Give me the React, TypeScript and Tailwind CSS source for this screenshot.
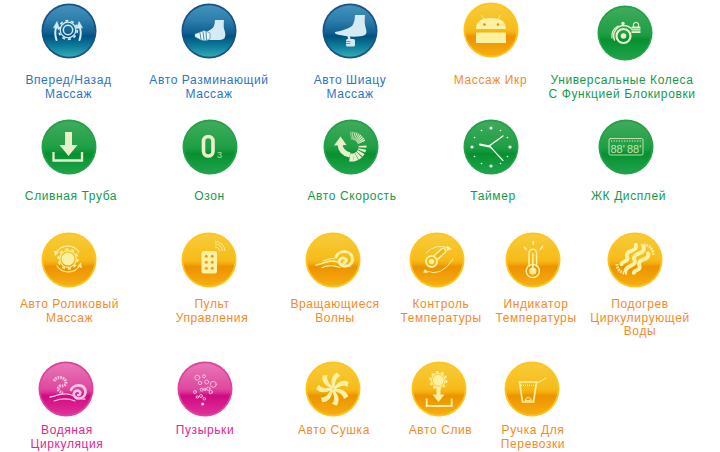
import type { ReactNode } from "react";

type Theme = "blue" | "green" | "yellow" | "pink";

const themes: Record<Theme, { rim: string; stops: [number, string][]; ink: string }> = {
  blue: {
    rim: "#1a5287",
    ink: "#d5eaf3",
    stops: [[0, "#4293ba"], [0.3, "#2c7dab"], [0.54, "#0c5f90"], [0.6, "#00527f"], [0.8, "#0d7f9c"], [1, "#35aab5"]],
  },
  green: {
    rim: "#23a049",
    ink: "#e6f1cb",
    stops: [[0, "#3fab5c"], [0.5, "#1f9f45"], [0.56, "#159a3e"], [0.63, "#07902f"], [1, "#1ea44a"]],
  },
  yellow: {
    rim: "#fdc51c",
    ink: "#fbf1a2",
    stops: [[0, "#f7cb38"], [0.5, "#f6bb1a"], [0.56, "#f4ae0e"], [0.63, "#ec9200"], [1, "#f6ae10"]],
  },
  pink: {
    rim: "#de429c",
    ink: "#f9c6e3",
    stops: [[0, "#e977b6"], [0.5, "#de489f"], [0.56, "#da3396"], [0.63, "#cf0a80"], [1, "#e0309a"]],
  },
};

function Ball({ theme, children }: { theme: Theme; children: ReactNode }) {
  const t = themes[theme];
  return (
    <svg width="56" height="56" viewBox="0 0 56 56" className="block shrink-0">
      <defs>
        <linearGradient id={`${theme}-fill`} x1="0" y1="0" x2="0" y2="1">
          {t.stops.map(([o, c]) => (
            <stop key={o} offset={o} stopColor={c} />
          ))}
        </linearGradient>
      </defs>
      <circle cx="28" cy="28" r="27.5" fill={t.rim} />
      <circle cx="28" cy="28" r="25.8" fill={`url(#${theme}-fill)`} />
      <g fill="none" strokeLinecap="round" strokeLinejoin="round" color={t.ink}>
        {children}
      </g>
    </svg>
  );
}

const ink = "currentColor";

function Gear({ cx, cy, r, disc }: { cx: number; cy: number; r: number; disc?: boolean }) {
  const c = 2 * Math.PI * (r + 0.3);
  return (
    <g>
      <circle cx={cx} cy={cy} r={r + 0.3} stroke={ink} strokeWidth="1.8" strokeDasharray={`${c / 20} ${c / 20}`} strokeLinecap="butt" />
      <circle cx={cx} cy={cy} r={r - 1.2} stroke={ink} strokeWidth="1.2" />
      <circle cx={cx} cy={cy} r={r * (disc ? 0.6 : 0.52)} stroke={ink} strokeWidth="1.5" fill={disc ? ink : "none"} />
    </g>
  );
}

const Icons = {
  gearArrows: (
    <g>
      <Gear cx={27} cy={27} r={9} />
      <path d="M15.5 37 Q13 30 15.5 23" stroke={ink} strokeWidth="2" />
      <path d="M12.5 24.5 L16 18.5 L18.5 25.5Z" fill={ink} stroke={ink} strokeWidth=".5" />
      <path d="M38.5 37 Q41 30 38.5 23" stroke={ink} strokeWidth="2" />
      <path d="M35.5 25.5 L38 18.5 L41.5 24.5Z" fill={ink} stroke={ink} strokeWidth=".5" />
    </g>
  ),
  footHand: (
    <g>
      <path d="M34 17 L43 17 Q42 24 44 29 Q46 36 39 37 L28 37 L20 33 Q20 30 24 29 Q31 27 33 23 Q34 20 34 17Z" fill={ink} />
      <path d="M14 31 L23 27.5 L29 30 L29 36 Q25 39 20 37 L14 34Z" fill="#eef7fb" stroke="#2f7ea6" strokeWidth=".6" />
      <path d="M19 30 L20 36 M22 29 L23 36.5 M25 29.5 L25.5 36.5" stroke="#2f7ea6" strokeWidth=".9" />
    </g>
  ),
  footThumb: (
    <g>
      <path d="M33 12 L43 12 Q42 20 44 26 Q46 32 40 33 Q30 35 18 32 Q12 31 13 29 Q24 27 30 23 Q33 19 33 12Z" fill={ink} />
      <path d="M26.5 32 L27.5 37" stroke={ink} strokeWidth="2.4" />
      <rect x="24" y="36" width="9" height="7.5" rx="1.5" fill={ink} />
      <path d="M24 38.5 H28 M24 40.5 H28" stroke="#1a7fa0" strokeWidth=".7" />
    </g>
  ),
  calf: (
    <g>
      <path d="M13 27 Q13 16 28 16 Q43 16 43 27Z" fill={ink} />
      <rect x="13" y="30.5" width="30" height="10.5" fill={ink} />
      <path d="M18.5 13.5 L22 18 M37.5 13.5 L34 18" stroke={ink} strokeWidth=".9" />
      <circle cx="21.5" cy="22.5" r="1.3" fill="#f28a12" />
      <circle cx="35" cy="22.5" r="1.3" fill="#f28a12" />
    </g>
  ),
  wheelLock: (
    <g>
      <circle cx="26.5" cy="31" r="7" stroke={ink} strokeWidth="2.2" />
      <circle cx="26.5" cy="31" r="2.8" fill={ink} />
      <path d="M17.5 35 A 10.5 10.5 0 0 1 26 20.5 Q33 20.5 36 26" stroke={ink} strokeWidth="1.5" />
      <path d="M15 33 A 12 12 0 0 1 21 21" stroke={ink} strokeWidth="1.2" />
      <circle cx="26" cy="18.5" r="1.7" fill={ink} />
      <rect x="34.5" y="21.5" width="9" height="6.5" rx=".5" fill={ink} />
      <path d="M36.5 21.5 V19 Q39 15.5 41.5 19 V21.5" stroke={ink} strokeWidth="1.2" />
      <path d="M34.5 23.8 H43.5 M34.5 25.8 H43.5" stroke="#1a9a42" strokeWidth=".6" />
    </g>
  ),
  download: (
    <g>
      <path d="M24 13 H31 V26 H36.5 L27.5 37 L18.5 26 H24Z" fill={ink} />
      <path d="M12.5 33 V41.5 H41 V33" stroke={ink} strokeWidth="2.3" strokeLinecap="butt" strokeLinejoin="miter" />
    </g>
  ),
  ozone: (
    <g>
      <rect x="21.5" y="17.5" width="9.5" height="19.5" rx="4.7" stroke={ink} strokeWidth="3.6" />
      <text x="35" y="39" fontSize="9" fill={ink} fillOpacity=".8" stroke="none" fontFamily="Liberation Sans, sans-serif">3</text>
    </g>
  ),
  speed: (
    <g>
      {Array.from({ length: 15 }).map((_, i) => {
        const a0 = (i < 9 ? i * 8 : 72 + (i - 8) * 17) - 4;
        const w = i < 9 ? 3 + i * 0.4 : 9 + (i - 9) * 2;
        const r = (d: number) => (d * Math.PI) / 180;
        const a1 = a0 + w;
        const p = (rad: number, d: number) => `${(28.5 + rad * Math.sin(r(d))).toFixed(2)} ${(27.7 - rad * Math.cos(r(d))).toFixed(2)}`;
        return <path key={i} d={`M${p(7, a0)} L${p(15, a0)} L${p(15, a1)} L${p(7, a1)}Z`} fill={ink} stroke="none" />;
      })}
      <path d="M27 36 Q17.5 34 17 25" stroke={ink} strokeWidth="5" strokeLinecap="butt" />
      <path d="M11 26.5 L17.5 17.5 L23.5 26Z" fill={ink} />
    </g>
  ),
  clock: (
    <g>
      {Array.from({ length: 12 }).map((_, i) => {
        const a = (i * 30 * Math.PI) / 180;
        return <circle key={i} cx={28 + 19 * Math.sin(a)} cy={28 - 19 * Math.cos(a)} r={i % 3 === 0 ? 1.6 : 0.8} fill="#ffffff" />;
      })}
      <path d="M26 27 L40 17" stroke="#fff" strokeWidth="1.4" />
      <path d="M26 26.5 L40 41.5" stroke="#fff" strokeWidth="1.1" />
      <path d="M26.5 27.5 L17 25.5" stroke="#fff" strokeWidth="2.2" />
    </g>
  ),
  lcd: (
    <g>
      <rect x="11" y="19.5" width="34" height="16.5" rx="1.5" stroke={ink} strokeWidth=".8" />
      <path d="M13 22 H43" stroke={ink} strokeWidth="1" strokeDasharray="1.2 1.4" strokeLinecap="butt" />
      <text x="12.5" y="34" fontSize="11" fill={ink} fillOpacity=".85" stroke="none" fontFamily="Liberation Sans, sans-serif">88'</text>
      <text x="29" y="34" fontSize="11" fill={ink} fillOpacity=".85" stroke="none" fontFamily="Liberation Sans, sans-serif">88'</text>
    </g>
  ),
  roller: (
    <g>
      <Gear cx={27} cy={27} r={9.5} disc />
      <path d="M15 21 A13.5 13.5 0 0 1 38 20" stroke={ink} strokeWidth="1.2" />
      <path d="M39 33 A13.5 13.5 0 0 1 16 34" stroke={ink} strokeWidth="1.2" />
      <path d="M14 24 L13 18.5 L18 20Z M40 30.5 L41 36 L36 34.5Z" fill={ink} />
    </g>
  ),
  remote: (
    <g>
      <rect x="20.5" y="19" width="15.5" height="22.5" rx="2.2" fill={ink} />
      {[0, 1, 2].map((r) => [0, 1].map((c) => <circle key={`${r}${c}`} cx={25.3 + c * 6} cy={24.3 + r * 6} r="1.5" fill="#f0a012" />))}
      <path d="M34 15 A4.5 4.5 0 0 1 38.5 19 M34 12 A7.5 7.5 0 0 1 41.5 19 M34 9.5 A10 10 0 0 1 44 19" stroke={ink} strokeWidth=".9" strokeLinecap="butt" />
    </g>
  ),
  wave: (
    <g>
      <path d="M31 25 C33 18 47 17 47.5 27 C47.5 34 39 36 35.5 32.5 C32.5 29 36 24.5 40 26.5 C42.5 28 41 31 39 30.5" stroke={ink} strokeWidth="3" />
      <path d="M11 33 C19 32 23 27 31 29.5 C36 31 40 35 45 34" stroke={ink} strokeWidth="1.5" />
      <path d="M17 35.5 C23 33 29 33 35 35.5" stroke={ink} strokeWidth="1.2" />
      <path d="M18 29 C22 28 25 26 29 26.5" stroke={ink} strokeWidth="1" />
    </g>
  ),
  tempControl: (
    <g>
      <path d="M23 29 L34 19" stroke={ink} strokeWidth="6.5" strokeLinecap="round" />
      <path d="M23 29 L34 19" stroke="#f5b015" strokeWidth="3.6" />
      <circle cx="22.5" cy="29.5" r="6.5" fill={ink} />
      <circle cx="22.5" cy="29.5" r="4.5" fill="#f5b015" />
      <circle cx="22.5" cy="29.5" r="2.7" fill={ink} />
      <path d="M17 21 Q26 11 40 16" stroke={ink} strokeWidth="1" />
      <path d="M38 13.5 L43 17 L37.5 19Z" fill={ink} />
      <path d="M17.5 39 Q32 46 44 27" stroke={ink} strokeWidth="1" />
      <path d="M16 37 L14 40.5 L19 41Z" fill={ink} />
    </g>
  ),
  tempIndicator: (
    <g>
      <path d="M19 15 L21.7 18 M28.3 9 V13 M38 13.7 L35 18" stroke={ink} strokeWidth="1.6" strokeLinecap="butt" />
      <path d="M24 34.5 V21 A3.8 3.8 0 0 1 31.6 21 V34.5" stroke={ink} strokeWidth="1.5" />
      <circle cx="27.8" cy="39" r="6.6" stroke={ink} strokeWidth="1.5" />
      <circle cx="27.8" cy="39" r="3.6" fill={ink} />
      <path d="M27.8 22 V36" stroke={ink} strokeWidth="1.6" />
    </g>
  ),
  heating: (
    <g>
      <g stroke={ink} strokeWidth="4" transform="rotate(35 28 27)">
        <path d="M28 12 C35 18 21 23 28 28 C34 32 24 37 27 42" />
        <path d="M20.5 15 C27 20 13.5 25 20.5 30 C25 33 18 36 20 39" />
        <path d="M35.5 15 C42 20 28.5 25 35.5 30 C40 33 33 36 35 39" />
      </g>
      <path d="M34 13.5 A9 9 0 0 1 46 23" stroke={ink} strokeWidth="2.8" strokeDasharray="1.7 1" strokeLinecap="butt" />
      <path d="M10 32 A9 9 0 0 0 21 41" stroke={ink} strokeWidth="2.8" strokeDasharray="1.7 1" strokeLinecap="butt" />
    </g>
  ),
  waterPink: (
    <g>
      <path d="M16 20 A6.5 6.5 0 0 1 27 19 Q30 25 22 25 Q17 29 25 32" stroke={ink} strokeWidth="3" strokeDasharray="1.6 .9" strokeLinecap="butt" />
      <path d="M33 29 C35 23 47 22 47.5 31 C47.5 37 40 39 37 36 C34 33 37 28.5 41 30 C43.5 31.5 42 34.5 40 34" stroke={ink} strokeWidth="2.6" />
      <path d="M12 36 C20 35 24 31 32 33.5 C37 35 42 39 47 38" stroke={ink} strokeWidth="1.3" />
      <path d="M16 40 C24 37 30 37 37 40" stroke={ink} strokeWidth="1.1" />
    </g>
  ),
  bubbles: (
    <g stroke={ink} strokeWidth=".9">
      {[
        [20.3, 16.7, 2.5], [27, 15.3, 1.5], [36.3, 23.3, 3], [29.7, 21, 2], [23, 22, 1.7], [31.3, 27.7, 1.7],
        [24.7, 28.7, 1.5], [28, 28.3, 1.2], [33.7, 31, 1.7], [18, 31, 1.5], [20.3, 36, 1.2], [24, 35, 1.5], [27.3, 37.7, 1.3],
      ].map(([x, y, r]) => (
        <circle key={`${x}-${y}`} cx={x} cy={y} r={r} />
      ))}
      <circle cx="25.7" cy="43" r="1.6" fill={ink} stroke="none" />
    </g>
  ),
  fan: (
    <g>
      {[0, 1, 2, 3, 4, 5, 6].map((i) => (
        <path key={i} transform={`rotate(${(i * 360) / 7 + 10} 28 28)`} d="M28 27.5 C24 21 24 15 29 11 L33 14 C28.5 17 28.5 22 30 27Z" fill={ink} />
      ))}
    </g>
  ),
  drain: (
    <g>
      <Gear cx={27.3} cy={19.3} r={8} disc />
      <path d="M25.5 26 H29.5 V33.5 H33.5 L27.5 41 L21.5 33.5 H25.5Z" fill={ink} />
      <path d="M15.7 37.5 V45 H40.7 V37.5" stroke={ink} strokeWidth="1.8" strokeLinecap="butt" strokeLinejoin="miter" />
    </g>
  ),
  cup: (
    <g>
      <path d="M15.5 21 H32.5 L29.5 41 H18.5Z" stroke={ink} strokeWidth="1.7" strokeLinejoin="miter" />
      <path d="M17 24.3 H31" stroke={ink} strokeWidth="1.2" strokeDasharray="1 1" strokeLinecap="butt" />
      <path d="M32.5 22.5 L42 17" stroke={ink} strokeWidth="1" />
      <path d="M21 39 Q24 33 27.5 39Z" stroke={ink} strokeWidth="1" />
    </g>
  ),
};

const labelColor: Record<Theme, string> = {
  blue: "text-[#2b75c0]",
  green: "text-[#149a4c]",
  yellow: "text-[#f58a27]",
  pink: "text-[#e5258f]",
};

type ItemProps = { theme: Theme; icon: ReactNode; lines: string[]; width: string; top: string; shift?: string };

function Item({ theme, icon, lines, width, top, shift = "" }: ItemProps) {
  return (
    <div className={`flex flex-col items-center shrink-0 ${width}`}>
      <div className={`h-[74px] ${top}`}>
        <Ball theme={theme}>{icon}</Ball>
      </div>
      <div className={`flex flex-col items-center whitespace-nowrap text-[12px] leading-[13.6px] tracking-[0.6px] ${labelColor[theme]} ${shift}`}>
        {lines.map((l) => (
          <span key={l}>{l}</span>
        ))}
      </div>
    </div>
  );
}

export default function App() {
  return (
    <div className="w-[720px] h-[452px] overflow-hidden bg-white flex flex-col font-['Liberation_Sans',sans-serif]">
      <div className="flex h-[116px]">
        <Item theme="blue" icon={Icons.gearArrows} lines={["Вперед/Назад", "Массаж"]} width="w-[137px]" top="pt-[3px]" />
        <Item theme="blue" icon={Icons.footHand} lines={["Авто Разминающий", "Массаж"]} width="w-[144px]" top="pt-[3px]" />
        <Item theme="blue" icon={Icons.footThumb} lines={["Авто Шиацу", "Массаж"]} width="w-[138px]" top="pt-[3px]" />
        <Item theme="yellow" icon={Icons.calf} lines={["Массаж Икр"]} width="w-[143px]" top="pt-[2px]" />
        <Item theme="green" icon={Icons.wheelLock} lines={["Универсальные Колеса", "С Функцией Блокировки"]} width="w-[126px]" top="pt-[5px]" shift="mr-[6px]" />
      </div>
      <div className="flex h-[108px]">
        <Item theme="green" icon={Icons.download} lines={["Сливная Труба"]} width="w-[138px]" top="pt-[3px]" shift="ml-[4px]" />
        <Item theme="green" icon={Icons.ozone} lines={["Озон"]} width="w-[143px]" top="pt-[3px]" />
        <Item theme="green" icon={Icons.speed} lines={["Авто Скорость"]} width="w-[140px]" top="pt-[3px]" shift="ml-[2px]" />
        <Item theme="green" icon={Icons.clock} lines={["Таймер"]} width="w-[140px]" top="pt-[3px]" shift="ml-[4px]" />
        <Item theme="green" icon={Icons.lcd} lines={["ЖК Дисплей"]} width="w-[130px]" top="pt-[3px]" shift="ml-[5px]" />
      </div>
      <div className="flex h-[126px]">
        <Item theme="yellow" icon={Icons.roller} lines={["Авто Роликовый", "Массаж"]} width="w-[138px]" top="pt-[8px]" shift="ml-[1px]" />
        <Item theme="yellow" icon={Icons.remote} lines={["Пульт", "Управления"]} width="w-[142px]" top="pt-[8px]" shift="ml-[6px]" />
        <Item theme="yellow" icon={Icons.wave} lines={["Вращающиеся", "Волны"]} width="w-[106px]" top="pt-[8px]" shift="ml-[4px]" />
        <Item theme="yellow" icon={Icons.tempControl} lines={["Контроль", "Температуры"]} width="w-[102px]" top="pt-[8px]" shift="ml-[8px]" />
        <Item theme="yellow" icon={Icons.tempIndicator} lines={["Индикатор", "Температуры"]} width="w-[90px]" top="pt-[8px]" shift="ml-[6px]" />
        <Item theme="yellow" icon={Icons.heating} lines={["Подогрев", "Циркулирующей", "Воды"]} width="w-[114px]" top="pt-[8px]" shift="ml-[10px]" />
      </div>
      <div className="flex">
        <Item theme="pink" icon={Icons.waterPink} lines={["Водяная", "Циркуляция"]} width="w-[132px]" top="pt-[11px]" shift="ml-[2px]" />
        <Item theme="pink" icon={Icons.bubbles} lines={["Пузырьки"]} width="w-[146px]" top="pt-[11px]" />
        <Item theme="yellow" icon={Icons.fan} lines={["Авто Сушка"]} width="w-[110px]" top="pt-[11px]" shift="ml-[2px]" />
        <Item theme="yellow" icon={Icons.drain} lines={["Авто Слив"]} width="w-[102px]" top="pt-[11px]" shift="ml-[3px]" />
        <Item theme="yellow" icon={Icons.cup} lines={["Ручка Для", "Перевозки"]} width="w-[84px]" top="pt-[11px]" shift="ml-[2px]" />
      </div>
    </div>
  );
}
